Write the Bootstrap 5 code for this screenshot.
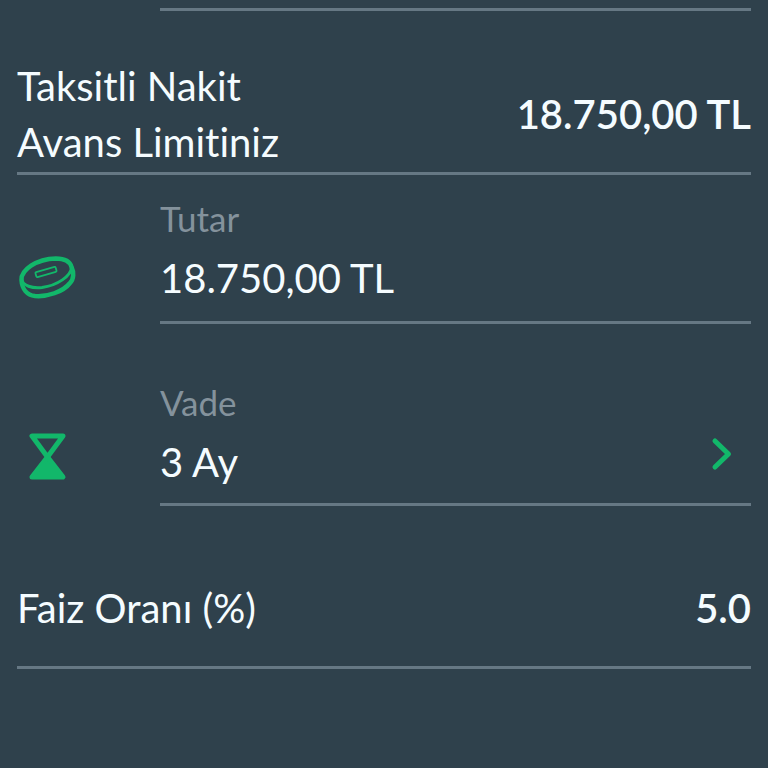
<!DOCTYPE html>
<html lang="tr">
<head>
<meta charset="utf-8">
<meta name="viewport" content="width=device-width, initial-scale=1">
<title>Taksitli Nakit Avans</title>
<link href="https://cdn.jsdelivr.net/npm/bootstrap@5.3.0/dist/css/bootstrap.min.css" rel="stylesheet">
<style>
  body { background: #2f414c; color: #f5fcff; font-family: Lato, "Open Sans", sans-serif; font-size: 40px; line-height: 56px; font-variant-ligatures: none; }
  .advance-form { padding: 0 17px; }
  .ruled { border-bottom: 3px solid #667884; }
  .indent { margin-left: 143px; }
  .tail-line { height: 11px; }
  .limit-row { padding: 47px 0 2px; }
  .limit-name { max-width: 300px; }
  .amount-row { padding: 21px 0 15px; }
  .term-row { padding: 56px 0 13px; }
  .rate-row { padding: 74px 0 30px; }
  .field-name { color: #84929c; font-size: 35px; line-height: 44px; margin-bottom: 10px; }
  .field-value { height: 56px; line-height: 56px; color: inherit; font-size: 40px; }
  .field-value:focus { outline: 2px solid #12b76a; }
  .strong-value { font-weight: 600; }
  .icon-cell { width: 143px; padding-top: 80px; }
  .term-icon { padding-top: 107px; }
  .icon-cell svg { display: block; }
  .green { color: #12b76a; }
  .chevron { margin-right: 18px; margin-top: -17px; }
</style>
</head>
<body>
<main class="advance-form">
  <div class="tail-line ruled indent"></div>

  <section class="limit-row ruled d-flex align-items-center justify-content-between">
    <div class="limit-name">Taksitli Nakit Avans Limitiniz</div>
    <div class="strong-value text-nowrap">18.750,00 TL</div>
  </section>

  <section class="d-flex">
    <div class="icon-cell green flex-shrink-0">
      <svg width="60" height="46" viewBox="0 0 60 46" fill="none" stroke="currentColor" stroke-linecap="round" stroke-linejoin="round" aria-hidden="true">
        <path d="M4.500 25C4 15 19 4 39 3.500C48 3.500 53 6.500 54.500 12C57 17 57 24 53 28C46 37 30 42 18 41C10 40 5 34 4.500 25Z" stroke-width="4.500"/>
        <path d="M4.500 24C6 31 15 33.500 25 32.500C40 30.500 54.500 21 54.500 12" stroke-width="3"/>
        <rect x="18.500" y="14.500" width="21" height="5" rx="1" transform="rotate(-16 29 17)" stroke-width="1.800"/>
      </svg>
    </div>
    <div class="amount-row ruled flex-grow-1">
      <label class="field-name d-block" for="amount">Tutar</label>
      <input class="field-value d-block w-100 border-0 bg-transparent p-0" id="amount" type="text" inputmode="decimal" value="18.750,00 TL">
    </div>
  </section>

  <section class="d-flex">
    <div class="icon-cell term-icon green flex-shrink-0">
      <svg width="60" height="52" viewBox="0 0 60 52" fill="none" stroke="currentColor" stroke-width="5" stroke-linecap="round" stroke-linejoin="round" aria-hidden="true">
        <path d="M15 5H46L30.500 26Z"/>
        <path d="M30.500 26L46 46H15Z" fill="currentColor"/>
      </svg>
    </div>
    <div class="term-row ruled flex-grow-1">
      <div class="field-name" id="term-name">Vade</div>
      <button class="field-value w-100 border-0 bg-transparent p-0 d-flex align-items-center justify-content-between text-start" id="term" type="button" aria-labelledby="term-name term">
        <span>3 Ay</span>
        <svg class="green chevron" width="22" height="34" viewBox="0 0 22 34" fill="none" stroke="currentColor" stroke-width="5" stroke-linecap="round" stroke-linejoin="round" aria-hidden="true">
          <path d="M4 4L17.500 17L4 30"/>
        </svg>
      </button>
    </div>
  </section>

  <section class="rate-row ruled d-flex align-items-center justify-content-between">
    <div>Faiz Oranı (%)</div>
    <div class="strong-value">5.0</div>
  </section>
</main>
<script src="https://cdn.jsdelivr.net/npm/bootstrap@5.3.0/dist/js/bootstrap.bundle.min.js"></script>
</body>
</html>
